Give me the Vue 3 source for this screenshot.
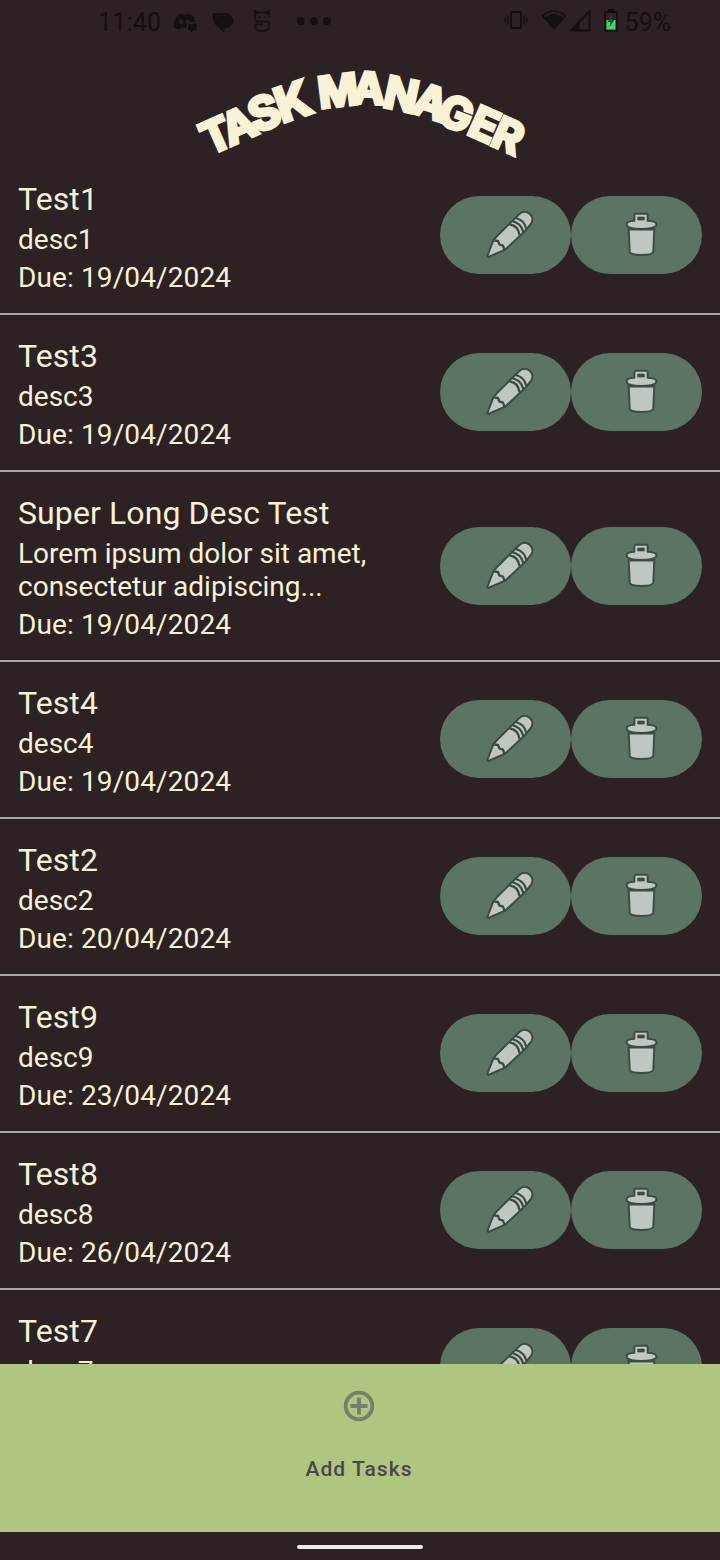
<script setup>
const tasks = [
  { title: 'Test1', desc: 'desc1', due: '19/04/2024' },
  { title: 'Test3', desc: 'desc3', due: '19/04/2024' },
  { title: 'Super Long Desc Test', desc: 'Lorem ipsum dolor sit amet, consectetur adipiscing...', due: '19/04/2024' },
  { title: 'Test4', desc: 'desc4', due: '19/04/2024' },
  { title: 'Test2', desc: 'desc2', due: '20/04/2024' },
  { title: 'Test9', desc: 'desc9', due: '23/04/2024' },
  { title: 'Test8', desc: 'desc8', due: '26/04/2024' },
  { title: 'Test7', desc: 'desc7', due: '27/04/2024' },
]

// Baseline centre, rotation and scale of each letter along the title's arch
const letters = [
  { c: 'T', x: 222.5, y: 149.5, r: -24, s: 1.02 },
  { c: 'A', x: 245, y: 139.5, r: -24, s: 1.02 },
  { c: 'S', x: 270, y: 128, r: -21, s: 1.06 },
  { c: 'K', x: 298, y: 117.5, r: -19, s: 1.1 },
  { c: 'M', x: 340, y: 106, r: -7, s: 1 },
  { c: 'A', x: 368, y: 103.5, r: 3, s: 1 },
  { c: 'N', x: 398, y: 110, r: 12, s: 1.02 },
  { c: 'A', x: 426, y: 117, r: 18, s: 1.02 },
  { c: 'G', x: 450.5, y: 128, r: 21, s: 1.02 },
  { c: 'E', x: 478, y: 139, r: 24, s: 1.02 },
  { c: 'R', x: 502, y: 150, r: 24, s: 1.02 },
]
</script>

<template>
  <div class="screen">
    <header class="status">
      <div class="side left">
        <span class="time">11:40</span>
        <svg class="discord" width="24" height="22" viewBox="0 0 24 22">
          <path d="M7 2 9 1.500l1 1.300h4l1-1.300 2 .5c3 1.200 4.800 4.500 5.300 8H14v6l-6-.5-1.500 1.800C3 16.700 1.500 15.800.8 15 .5 9 3 4 7 2Z" fill="#151111" />
          <ellipse cx="8.200" cy="9.800" rx="1.900" ry="2.200" fill="#2c2123" />
          <ellipse cx="14.300" cy="9.500" rx="1.500" ry="1.900" fill="#2c2123" />
          <path d="M15 11.800H23.500V18.500H20.500L17.500 21V18.500H15Z" fill="#151111" />
        </svg>
        <svg class="chat" width="22" height="22" viewBox="0 0 22 22">
          <path d="M.5 1H12.500Q17 1 18.500 3.500 21.500 5.500 21 9.500 20.500 15.500 13 16.200L11.800 21 7 15.500Q1 12 1 6.500Z" fill="#151111" />
          <path d="M2.800 7Q3.500 3.500 8 3.300H15" fill="none" stroke="#2c2123" stroke-width=".6" />
        </svg>
        <svg class="sapp" width="18" height="24" viewBox="0 0 18 24">
          <path d="M16 8V6Q15 4 12 3.500H6Q3 4 2 6V9Q2 12.500 5 12.500H16V16Q16 22 10 22H8Q2 22 2 16V15.500H10M2 6V1.500L5.500 3.500M16 6V1.500L12.500 3.500" fill="none" stroke="#171212" stroke-width="1.800" />
          <circle cx="6.500" cy="8" r=".9" fill="#171212" /><circle cx="11.500" cy="8" r=".9" fill="#171212" />
        </svg>
        <svg class="dots" width="36" height="10" viewBox="0 0 36 10" fill="#151111">
          <circle cx="5" cy="5" r="4" /><circle cx="18" cy="5" r="4" /><circle cx="31" cy="5" r="4" />
        </svg>
      </div>
      <div class="side right">
        <svg class="vibrate" width="26" height="20" viewBox="0 0 26 20" fill="none" stroke="#151111" stroke-width="2">
          <rect x="8" y="2" width="10" height="16" rx="1" />
          <path d="M5 5.500v9M21 5.500v9M2 7.500v5M24 7.500v5" stroke-width="1.700" />
        </svg>
        <svg class="wifi" width="28" height="24" viewBox="0 0 28 24">
          <path d="M1.500 7.500Q14-3 26.500 7.500L14 22Z" fill="#151111" />
          <path d="M4.300 8.600Q14 1 23.700 8.600" fill="none" stroke="#2c2123" stroke-width="1.800" />
        </svg>
        <svg class="signal" width="22" height="24" viewBox="0 0 22 24">
          <path d="M2 21.500 20.500 2V21.500Z" fill="none" stroke="#151111" stroke-width="2" />
          <path d="M1 22 10.500 12V22Z" fill="#151111" />
        </svg>
        <svg class="battery" width="14" height="24" viewBox="0 0 14 24">
          <rect x="3.500" y="0" width="7" height="3" fill="#151111" />
          <rect x="1" y="3" width="12" height="19" rx="1" fill="#2c2123" stroke="#151111" stroke-width="2" />
          <rect x="2.500" y="11" width="9" height="9.500" fill="#3ddc68" />
          <path d="M8 5 3.500 13h3L5.500 18.500 10.500 10.500H7.500Z" fill="#214b2e" />
        </svg>
        <span class="pct">59%</span>
      </div>
    </header>

    <svg class="logo" width="720" height="110" viewBox="0 48 720 110" role="img" aria-label="Task Manager">
      <text
        v-for="(l, i) in letters"
        :key="i"
        :transform="`translate(${l.x} ${l.y}) rotate(${l.r}) scale(${l.s})`"
        text-anchor="middle"
      >{{ l.c }}</text>
    </svg>

    <main class="list">
      <article v-for="t in tasks" :key="t.title" class="row">
        <div class="info">
          <h2>{{ t.title }}</h2>
          <p class="desc">{{ t.desc }}</p>
          <p class="due">Due: {{ t.due }}</p>
        </div>
        <button class="action" aria-label="Edit">
          <svg width="131" height="78" viewBox="30 32 393 234" fill="#bdc8c0" stroke="#3b4d43" stroke-width="6" stroke-linejoin="round" stroke-linecap="round">
            <path d="M172 212 190 165 205 148 268 86Q282 73 299 85 313 98 304 114L289 133 227 192 175 215Z" />
            <path d="M191 165 204 167 208 177 219 181 223 192M241 118Q263 121 268 147M249 108Q274 115 279 138M258 98Q283 105 289 130" fill="none" stroke-width="7" />
          </svg>
        </button>
        <button class="action" aria-label="Delete">
          <svg width="131" height="78" viewBox="423 33 393 234" fill="#bdc8c0" stroke="#3b4d43" stroke-width="6" stroke-linejoin="round">
            <path d="M596 130H673L670 200Q668 210 634 210T599 200Z" />
            <path d="M613 107V90Q613 86 617 86H649Q653 86 653 90V107Q679 108 679 117V122Q670 132 634 132T590 122V117Q590 108 613 107Z" />
            <path d="M598 133H671" stroke-width="7" />
            <rect x="623" y="96" width="20" height="9" fill="#3b4d43" stroke-width="2" />
          </svg>
        </button>
      </article>
    </main>

    <footer class="add">
      <svg width="32" height="32" viewBox="0 0 32 32" fill="none" stroke="#74806a" stroke-width="3.800">
        <circle cx="16" cy="16" r="13.300" />
        <path d="M16 7.500v17M7.500 16h17" />
      </svg>
      <span>Add Tasks</span>
    </footer>
    <div class="gesture"><i></i></div>
  </div>
</template>

<style>
body { margin: 0; background: #2c2123; }
</style>

<style scoped>
.screen {
  width: 720px;
  height: 1560px;
  display: flex;
  flex-direction: column;
  overflow: hidden;
  background: #2c2123;
  color: #f9f2d7;
  font-family: Roboto, sans-serif;
}
.status {
  height: 48px;
  flex: none;
  display: flex;
  justify-content: space-between;
  box-sizing: border-box;
  padding: 0 49px 4px 98px;
  color: #151111;
  font-size: 25px;
}
.side { display: flex; align-items: center; }
.side svg { flex: none; }
.time { width: 63px; line-height: 30px; margin-top: 2px; letter-spacing: 0.2px; }
.discord { margin-left: 12px; margin-top: 2px; }
.chat { margin-left: 15px; margin-top: 1px; }
.sapp { margin-left: 19px; margin-top: -3px; }
.dots { margin-left: 25px; margin-top: -2px; }
.vibrate { margin-top: -4px; }
.wifi { margin-left: 11px; margin-top: -5px; }
.signal { margin-left: 1px; margin-top: -3px; }
.battery { margin-left: 13px; margin-top: -3px; }
.pct { margin-left: 7px; margin-top: 2px; line-height: 30px; }
.logo { flex: none; display: block; overflow: visible; }
.logo text {
  font-family: Inter, sans-serif;
  font-weight: 700;
  font-size: 43px;
  fill: #f9f2d7;
  stroke: #f9f2d7;
  stroke-width: 3.4px;
}
.list { flex: 1; min-height: 0; overflow: hidden; }
.row {
  display: flex;
  align-items: center;
  padding: 22px 18px 19px;
  border-bottom: 2px solid #a8a8a4;
}
.info { width: 422px; flex: none; }
h2 {
  margin: 0;
  font-size: 32px;
  line-height: 38px;
  font-weight: 400;
  letter-spacing: 0.1px;
}
p {
  margin: 5px 0 0;
  font-size: 28px;
  line-height: 33px;
}
.desc { max-width: 380px; }
.due { letter-spacing: 0.12px; }
.action {
  flex: none;
  width: 131px;
  height: 78px;
  margin: -4px 0 0;
  padding: 0;
  border: 0;
  border-radius: 39px;
  background: #5c7464;
}
.action svg { display: block; }
.add {
  height: 168px;
  flex: none;
  box-sizing: border-box;
  padding: 26px 2px 0 0;
  display: flex;
  flex-direction: column;
  align-items: center;
  background: #afc680;
}
.add span {
  margin-top: 34px;
  font-size: 21px;
  line-height: 26px;
  font-weight: 500;
  letter-spacing: 1.05px;
  color: #49454f;
}
.gesture {
  height: 28px;
  flex: none;
  display: flex;
  justify-content: center;
  align-items: center;
}
.gesture i {
  width: 126px;
  height: 4px;
  margin-top: 2px;
  border-radius: 2px;
  background: #eeecec;
}
</style>
